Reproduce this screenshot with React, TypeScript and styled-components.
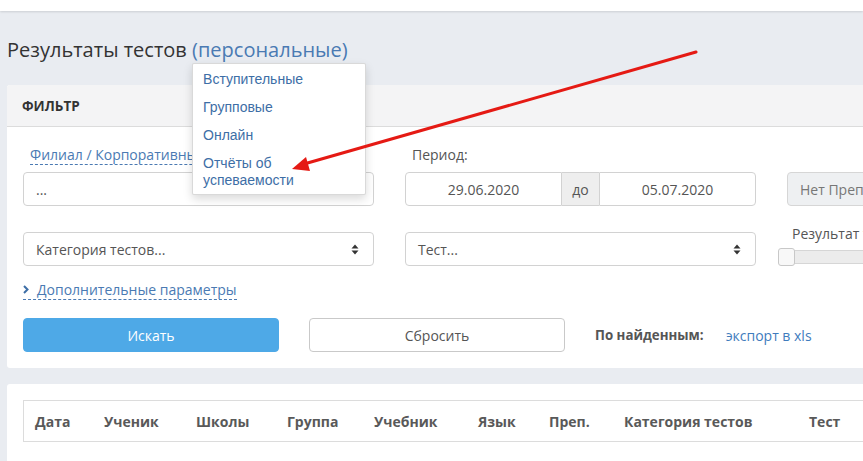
import React from 'react';
import styled, { createGlobalStyle } from 'styled-components';

const GlobalStyle = createGlobalStyle`
  html, body {
    margin: 0;
    padding: 0;
    background: #e9ecf1;
    overflow: hidden;
  }
  body {
    font-family: 'Open Sans', 'Noto Sans', sans-serif;
    color: #333;
  }
`;

const Page = styled.div`
  position: relative;
  width: 863px;
  height: 461px;
  overflow: hidden;
`;

const TopBar = styled.div`
  height: 11px;
  background: #fff;
  box-shadow: 0 1px 2px rgba(0, 0, 0, 0.12);
`;

const Content = styled.div`
  padding-left: 7px;
  width: 1100px;
`;

const PageTitle = styled.h1`
  margin: 26px 0 22px;
  font-size: 20px;
  line-height: 26px;
  font-weight: 400;
  color: #333;
`;

const TitleSwitch = styled.span`
  position: relative;
  color: #4a7ab3;
  cursor: pointer;
`;

const Menu = styled.ul`
  position: absolute;
  top: 100%;
  left: 0;
  width: 172px;
  margin: 0;
  padding: 1px 0 0;
  list-style: none;
  background: #fff;
  border: 1px solid rgba(0, 0, 0, 0.15);
  border-radius: 2px;
  box-shadow: 0 4px 10px rgba(0, 0, 0, 0.15);
  z-index: 10;
`;

const MenuItem = styled.li`
  padding: 5.5px 11px 5.5px 10px;
  font-family: 'Liberation Sans', Arial, sans-serif;
  font-size: 14px;
  line-height: 17px;
  color: #3d6ea6;
`;

const Panel = styled.section`
  background: #fff;
  border-radius: 3px;
  overflow: hidden;
`;

const PanelHeader = styled.div`
  height: 41px;
  display: flex;
  align-items: center;
  padding-left: 15px;
  background: #f4f4f5;
  border-bottom: 1px solid #dcdcdc;
  font-size: 13.5px;
  font-weight: 700;
  color: #333;
`;

const PanelBody = styled.div`
  padding: 18px 16px 16px;
`;

const FieldRow = styled.div<{ $gap?: number }>`
  display: grid;
  grid-template-columns: 351px 351px 200px;
  column-gap: 31px;
  margin-top: ${p => p.$gap ?? 0}px;
  align-items: start;
`;

const FieldLabel = styled.div<{ $indent?: number }>`
  height: 20px;
  line-height: 20px;
  font-size: 14px;
  color: #555;
  padding-left: ${p => p.$indent ?? 0}px;
  margin-bottom: 7px;
`;

const DashedLink = styled.span`
  color: #4a7ab3;
  border-bottom: 1px dashed #4a7ab3;
  cursor: pointer;
`;

const SelectBox = styled.div`
  height: 34px;
  box-sizing: border-box;
  display: flex;
  align-items: center;
  justify-content: space-between;
  padding: 0 14px 0 12px;
  border: 1px solid #d2d2d2;
  border-radius: 4px;
  font-size: 14px;
  color: #555;
  background: #fff;
`;

const DateRange = styled.div`
  display: flex;
  height: 34px;
`;

const DateInput = styled.div<{ $side: 'left' | 'right' }>`
  flex: 1;
  display: flex;
  align-items: center;
  justify-content: center;
  border: 1px solid #d2d2d2;
  border-radius: ${p => (p.$side === 'left' ? '4px 0 0 4px' : '0 4px 4px 0')};
  font-size: 14px;
  color: #555;
`;

const Addon = styled.div`
  width: 37px;
  display: flex;
  align-items: center;
  justify-content: center;
  background: #eee;
  border-top: 1px solid #d2d2d2;
  border-bottom: 1px solid #d2d2d2;
  font-size: 14px;
  color: #555;
`;

const DisabledBox = styled.div`
  height: 34px;
  box-sizing: border-box;
  display: flex;
  align-items: center;
  padding-left: 12px;
  background: #eef0f2;
  border: 1px solid #d6d6d6;
  border-radius: 4px;
  font-size: 14px;
  color: #777;
  white-space: nowrap;
`;

const ResultCell = styled.div`
  margin-top: -8px;
`;

const ResultLabel = styled.div`
  padding-left: 5px;
  height: 20px;
  line-height: 20px;
  font-size: 14px;
  color: #555;
  white-space: nowrap;
`;

const SliderTrack = styled.div`
  position: relative;
  margin: 6px 0 0 -9px;
  height: 12px;
  width: 240px;
  background: #ececec;
  border: 1px solid #d6d6d6;
  border-radius: 3px;
`;

const SliderHandle = styled.div`
  position: absolute;
  left: -1px;
  top: -3px;
  width: 15px;
  height: 16px;
  background: #f8f8f8;
  border: 1px solid #c8c8c8;
  border-radius: 3px;
`;

const MoreParams = styled.div`
  margin-top: 14px;
  display: flex;
  align-items: center;
  height: 20px;
  font-size: 14px;
`;

const MoreLink = styled.span`
  display: inline-flex;
  align-items: center;
  gap: 8px;
  color: #4a7ab3;
  border-bottom: 1px dashed #4a7ab3;
  line-height: 19px;
`;

const ActionRow = styled.div`
  margin-top: 18px;
  display: flex;
  align-items: center;
`;

const Button = styled.button<{ $primary?: boolean }>`
  width: 256px;
  height: 34px;
  box-sizing: border-box;
  border-radius: 4px;
  font-family: inherit;
  font-size: 14px;
  cursor: pointer;
  background: ${p => (p.$primary ? '#4ea9e7' : '#fff')};
  color: ${p => (p.$primary ? '#fff' : '#555')};
  border: 1px solid ${p => (p.$primary ? '#4ea9e7' : '#c9c9c9')};
  margin-right: 30px;
`;

const ExportLabel = styled.span`
  font-size: 13.3px;
  font-weight: 700;
  color: #555;
  margin-right: 22px;
`;

const ExportLink = styled.span`
  font-size: 14px;
  color: #3f7cbd;
`;

const ResultsPanel = styled(Panel)`
  margin-top: 16px;
  padding: 16px;
  height: 200px;
`;

const TableHead = styled.div`
  display: grid;
  grid-template-columns: 69px 92px 91px 87px 104px 71px 75px 185px 120px;
  height: 40px;
  align-items: center;
  padding-left: 11px;
  border: 1px solid #dcdcdc;
  border-right: none;
`;

const HeadCell = styled.div`
  font-size: 14px;
  font-weight: 700;
  color: #595959;
  white-space: nowrap;
`;

const Annotation = styled.svg`
  position: absolute;
  left: 0;
  top: 0;
  pointer-events: none;
  z-index: 20;
`;

function SelectCaret() {
  return (
    <svg width="8" height="11" viewBox="0 0 8 11">
      <path d="M0.5 4.5 L4 0.5 L7.5 4.5 Z M0.5 6.5 L7.5 6.5 L4 10.5 Z" fill="#333" />
    </svg>
  );
}

function Chevron() {
  return (
    <svg width="6" height="9" viewBox="0 0 6 9">
      <path d="M1 1 L4.5 4.5 L1 8" stroke="#3d6ea6" strokeWidth="2" fill="none" />
    </svg>
  );
}

const columns = ['Дата', 'Ученик', 'Школы', 'Группа', 'Учебник', 'Язык', 'Преп.', 'Категория тестов', 'Тест'];
const kinds = ['Вступительные', 'Групповые', 'Онлайн', 'Отчёты об успеваемости'];

export default function App() {
  return (
    <Page>
      <GlobalStyle />
      <TopBar />
      <Content>
        <PageTitle>
          Результаты тестов{' '}
          <TitleSwitch>
            (персональные)
            <Menu>
              {kinds.map(k => (
                <MenuItem key={k}>{k}</MenuItem>
              ))}
            </Menu>
          </TitleSwitch>
        </PageTitle>

        <Panel>
          <PanelHeader>ФИЛЬТР</PanelHeader>
          <PanelBody>
            <FieldRow>
              <FieldLabel $indent={7}>
                <DashedLink>Филиал / Корпоративные клиенты</DashedLink>
              </FieldLabel>
              <FieldLabel $indent={7}>Период:</FieldLabel>
              <div />
            </FieldRow>
            <FieldRow>
              <SelectBox>
                <span>...</span>
                <SelectCaret />
              </SelectBox>
              <DateRange>
                <DateInput $side="left">29.06.2020</DateInput>
                <Addon>до</Addon>
                <DateInput $side="right">05.07.2020</DateInput>
              </DateRange>
              <DisabledBox>Нет Преподавателей</DisabledBox>
            </FieldRow>
            <FieldRow $gap={26}>
              <SelectBox>
                <span>Категория тестов...</span>
                <SelectCaret />
              </SelectBox>
              <SelectBox>
                <span>Тест...</span>
                <SelectCaret />
              </SelectBox>
              <ResultCell>
                <ResultLabel>Результат теста</ResultLabel>
                <SliderTrack>
                  <SliderHandle />
                </SliderTrack>
              </ResultCell>
            </FieldRow>
            <MoreParams>
              <MoreLink>
                <Chevron />
                Дополнительные параметры
              </MoreLink>
            </MoreParams>
            <ActionRow>
              <Button $primary>Искать</Button>
              <Button>Сбросить</Button>
              <ExportLabel>По найденным:</ExportLabel>
              <ExportLink>экспорт в xls</ExportLink>
            </ActionRow>
          </PanelBody>
        </Panel>

        <ResultsPanel>
          <TableHead>
            {columns.map(c => (
              <HeadCell key={c}>{c}</HeadCell>
            ))}
          </TableHead>
        </ResultsPanel>
      </Content>

      <Annotation width="863" height="461">
        <line x1="696" y1="52" x2="304" y2="164" stroke="#e51a14" strokeWidth="3" strokeLinecap="round" />
        <path d="M292 169 L306 157 L310 171 Z" fill="#e51a14" />
      </Annotation>
    </Page>
  );
}
